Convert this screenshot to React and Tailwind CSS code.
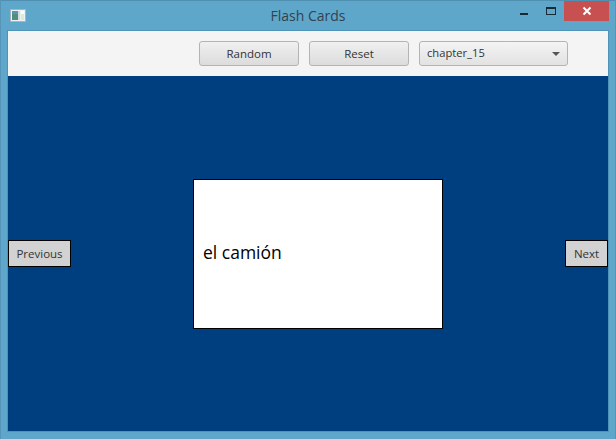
const font = { fontFamily: '"Open Sans", "Noto Sans", sans-serif' };

function AppIcon() {
  return (
    <svg width="16" height="14" viewBox="0 0 16 14" className="shrink-0">
      <rect x="0.5" y="0.5" width="15" height="12" fill="#eef2f2" stroke="#a9b4bc" />
      <rect x="2" y="2" width="6" height="9" fill="#4d8f80" />
      <rect x="2" y="2" width="6" height="3" fill="#5b93b0" />
      <rect x="8" y="2" width="2" height="9" fill="#d5dcdc" />
      <rect x="11" y="2" width="3" height="3" fill="#ffffff" />
      <rect x="11" y="5" width="3" height="6" fill="#dfe9d8" />
    </svg>
  );
}

function ToolButton({ children }) {
  return (
    <button className="w-[100px] h-[25px] rounded-[3px] border border-[#b4b4b4] bg-gradient-to-b from-[#f0f0f0] to-[#dcdcdc] text-[11.5px] leading-none text-[#333333]">
      {children}
    </button>
  );
}

function NavButton({ children, className }) {
  return (
    <button className={`h-[27px] border border-black bg-[#d2d2d2] text-[11.5px] leading-none text-[#333333] ${className}`}>
      {children}
    </button>
  );
}

export default function App() {
  return (
    <div
      style={font}
      className="w-[616px] h-[439px] flex flex-col bg-[#5fa6cb] border-x border-[#5596b8] overflow-hidden"
    >
      <div className="h-[31px] shrink-0 grid grid-cols-[1fr_auto_1fr] items-start border-t border-[#4f8fb0]">
        <div className="pl-[9px] pt-[8px]">
          <AppIcon />
        </div>
        <div className="pt-[5px] text-center text-[14px] leading-[19px] text-[#33424d]">
          Flash Cards
        </div>
        <div className="flex items-start justify-end pr-[6px]">
          <div className="w-[8px] h-[2px] bg-[#1a2a33] mt-[12px] mr-[18px]" />
          <div className="w-[10px] h-[8px] border border-[#1a2a33] border-t-2 mt-[6px] mr-[8px]" />
          <div className="w-[45px] h-[20px] bg-[#c75050] flex items-center justify-center">
            <svg width="10" height="10" viewBox="0 0 10 10">
              <path d="M1.5 1.5 L8.5 8.5 M8.5 1.5 L1.5 8.5" stroke="#ffffff" strokeWidth="2" />
            </svg>
          </div>
        </div>
      </div>

      <div className="mx-[7px] w-[600px] h-[400px] flex flex-col outline outline-1 outline-[#4f93b6]">
        <div className="h-[45px] shrink-0 bg-[#f4f4f4] flex items-center justify-end gap-[10px] pr-[40px]">
          <ToolButton>Random</ToolButton>
          <ToolButton>Reset</ToolButton>
          <div className="w-[149px] h-[25px] rounded-[3px] border border-[#b4b4b4] bg-gradient-to-b from-[#f4f4f4] to-[#e2e2e2] flex items-center justify-between pl-[7px] pr-[7px] text-[11.2px] text-[#333333]">
            <span>chapter_15</span>
            <svg width="8" height="4" viewBox="0 0 8 4">
              <path d="M0 0 H8 L4 4 Z" fill="#555555" />
            </svg>
          </div>
        </div>
        <div className="flex-1 bg-[#003f7f] flex items-center justify-between">
          <NavButton className="w-[63px]">Previous</NavButton>
          <div className="w-[250px] h-[150px] bg-white border border-black flex items-center pl-[9px] pb-[2px] text-[17.5px] text-black">
            el camión
          </div>
          <NavButton className="w-[43px]">Next</NavButton>
        </div>
      </div>
    </div>
  );
}
